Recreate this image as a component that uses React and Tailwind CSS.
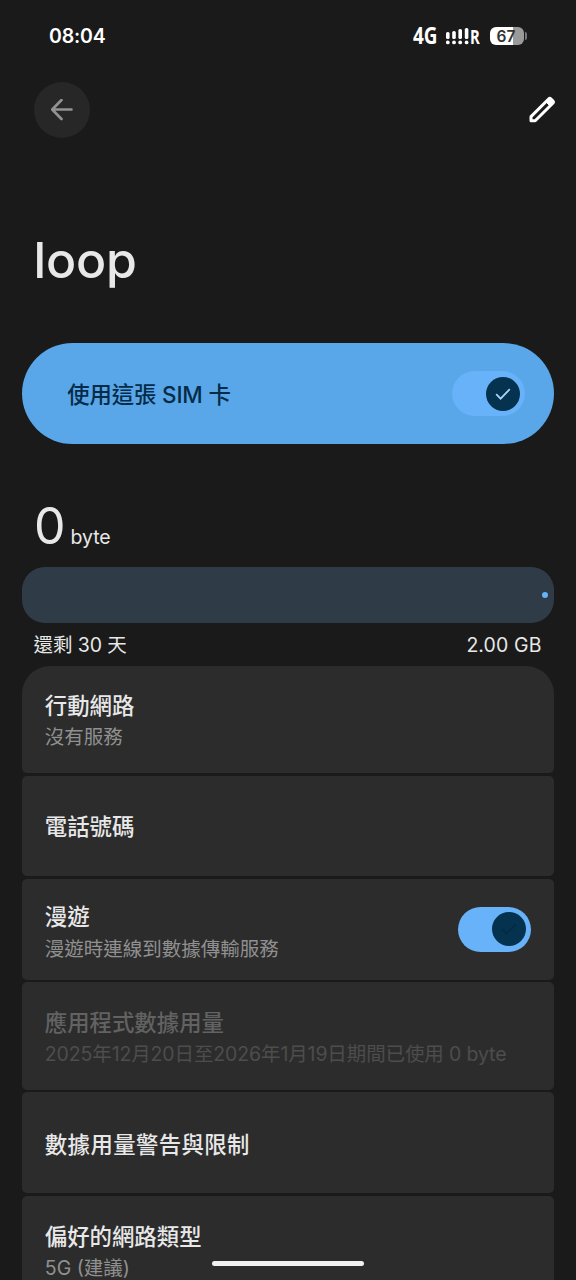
import clsx from "clsx";

const rows = [
  { title: "行動網路", sub: "沒有服務", box: "h-[107.5px] rounded-t-[28px] rounded-b-[5px] pt-[4px]" },
  { title: "電話號碼", box: "h-[100.7px] rounded-[5px] pt-[3px]" },
  { title: "漫遊", sub: "漫遊時連線到數據傳輸服務", box: "h-[101px] rounded-[5px]", on: true },
  { title: "應用程式數據用量", sub: "2025年12月20日至2026年1月19日期間已使用 0 byte", box: "h-[107.5px] rounded-[5px] pt-[4px]", disabled: true },
  { title: "數據用量警告與限制", box: "h-[101px] rounded-[5px] pt-[4px] tracking-[0.4px]" },
  { title: "偏好的網路類型", sub: "5G (建議)", box: "h-[107.5px] rounded-[5px] pt-[4px]" }
];

function Toggle({ check, className }) {
  return (
    <span className={clsx("flex h-[45px] w-[73px] shrink-0 items-center justify-end rounded-full bg-[#67b2f9] pr-[5.5px]", className)}>
      <span className="grid size-[34px] place-items-center rounded-full bg-[#04324f]">
        <svg viewBox="0 0 16 12" className="h-[12px] w-[16px]" fill="none" stroke={check} strokeWidth="1.8">
          <path d="M1.2 6.2 5.6 10.6 14.8 1.2" />
        </svg>
      </span>
    </span>
  );
}

function StatusBar() {
  return (
    <header className="flex h-[72px] items-center justify-between pl-[49px] pr-[49px] text-white">
      <div className="pt-[1px] text-[19.5px] font-semibold leading-none tracking-[-0.15px]">08:04</div>
      <div className="flex items-center">
        <span className="w-[33px] whitespace-nowrap font-['Open_Sans'] text-[22.5px] font-bold leading-none">
          <span className="inline-block origin-left scale-x-[0.84]">4G</span>
        </span>
        <svg viewBox="0 0 24 18" className="h-[18px] w-[24px]" fill="#fff">
          <rect x="0" y="5" width="3.6" height="7" rx="1.6" />
          <rect x="6.2" y="4" width="3.6" height="8" rx="1.6" />
          <rect x="12.4" y="2" width="3.6" height="10" rx="1.6" />
          <rect x="18.8" y="1" width="3.6" height="11" rx="1.6" />
          <circle cx="1.8" cy="15.4" r="1.9" />
          <circle cx="8" cy="15.4" r="1.9" />
          <circle cx="14.2" cy="15.4" r="1.9" />
          <circle cx="20.6" cy="15.4" r="1.9" />
        </svg>
        <span className="w-[20px] pt-[1px] font-['Open_Sans'] text-[19.5px] font-bold leading-none">
          <span className="inline-block origin-left scale-x-[0.76]">R</span>
        </span>
        <span className="flex h-[18px] w-[34px] items-center justify-center rounded-[6px] bg-linear-to-r from-white from-68% to-[#9a9a9a] to-68% pr-[1px] pt-[1px] text-[15.5px] font-semibold leading-none text-[#333]">
          67
        </span>
        <span className="ml-[1.5px] h-[8px] w-[2px] rounded-r-full bg-[#777]" />
      </div>
    </header>
  );
}

function Row({ title, sub, box, on, disabled }) {
  return (
    <li className={clsx("flex items-center justify-between bg-[#2c2c2c] pl-[22.5px] pr-[22.5px]", box)}>
      <div className={clsx("whitespace-nowrap", on && "pt-[8px]")}>
        <div className={clsx("text-[22.4px] font-medium leading-[32px]", disabled ? "text-[#626262]" : "text-[#e8e8e8]")}>{title}</div>
        {sub && (
          <div
            className={clsx(
              "text-[19.5px]",
              on ? "leading-[32px]" : "leading-[30px]",
              disabled ? "tracking-[-0.12px] text-[#4d4d4d]" : "text-[#909090]"
            )}
          >
            {sub}
          </div>
        )}
      </div>
      {on && <Toggle check="#032b45" />}
    </li>
  );
}

export default function App() {
  return (
    <div className="relative h-[1280px] w-[576px] overflow-hidden bg-[#1a1a1a] font-['Inter','Noto_Sans_CJK_TC',sans-serif] text-[#e8e8e8]">
      <StatusBar />

      <nav className="mt-[9.5px] flex h-[56px] items-center justify-between pl-[33.5px] pr-[20px]">
        <button className="grid size-[56px] place-items-center rounded-full bg-[#272727]">
          <svg viewBox="0 0 22 22" className="size-[22px]" fill="none" stroke="#929292" strokeWidth="2.6" strokeLinecap="round" strokeLinejoin="round">
            <path d="M20.5 10.5H1.5M10.5 1 1.2 10.5l9.3 9.5" />
          </svg>
        </button>
        <svg viewBox="0 0 28 28" className="size-[28px]" fill="none" stroke="#fff" strokeWidth="3" strokeLinejoin="round">
          <path d="M3 20.6 20.6 3a1.7 1.7 0 0 1 2.4 0l1.8 1.8a1.7 1.7 0 0 1 0 2.4L7.2 24.8H3Z" />
          <path d="m17.8 5.8 4.2 4.2 3.2-3.2-4.2-4.2Z" fill="#fff" strokeWidth="1" />
        </svg>
      </nav>

      <h1 className="ml-[33.5px] mt-[88.5px] h-[68px] text-[50px] font-medium leading-[68px] tracking-[-0.2px]">loop</h1>

      <section className="ml-[22.3px] mt-[49.3px] flex h-[100.5px] w-[531.4px] items-center justify-between rounded-full bg-[#59a6e8] pl-[45px] pr-[28.5px]">
        <span className="pt-[3px] text-[22.4px] font-medium tracking-[-0.15px] text-[#042c49]">使用這張 SIM 卡</span>
        <Toggle check="#a5d3fb" />
      </section>

      <section className="mt-[51px]">
        <div className="flex h-[72px] items-baseline pl-[34px]">
          <span className="text-[50px] leading-[62px]">0</span>
          <span className="ml-[5px] text-[19.5px] tracking-[-0.1px]">byte</span>
        </div>
        <div className="ml-[22.3px] flex h-[56px] w-[531.4px] items-center justify-end rounded-[23px] bg-[#2f3c48] pr-[6px]">
          <span className="size-[6px] rounded-full bg-[#67b2f9]" />
        </div>
        <div className="flex h-[42.8px] items-center justify-between pl-[33.5px] pr-[34.5px] pt-[2px] text-[19.5px]">
          <span className="tracking-[-0.1px]">還剩 30 天</span>
          <span className="tracking-[0.1px]">2.00 GB</span>
        </div>
      </section>

      <ul className="ml-[22.3px] w-[531.4px] space-y-[2.5px]">
        {rows.map((r) => (
          <Row key={r.title} {...r} />
        ))}
      </ul>

      <div className="absolute bottom-[14px] left-[212px] h-[5px] w-[152px] rounded-full bg-[#f0f0f0]" />
    </div>
  );
}
